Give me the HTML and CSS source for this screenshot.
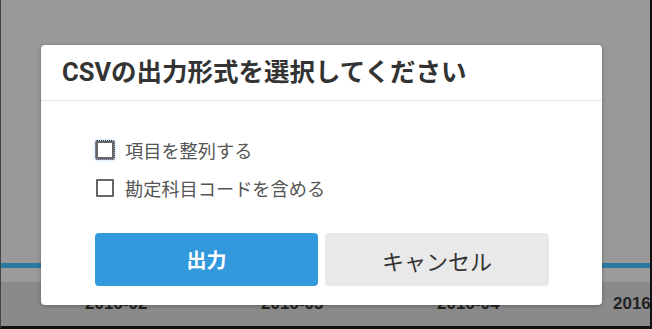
FILE: index.html
```html
<!DOCTYPE html>
<html lang="ja">
<head>
  <meta charset="UTF-8" />
  <title>CSV出力</title>
  <link rel="stylesheet" href="styles.css">
</head>
<body>
  <div class="screen">
    <div class="chart">
      <div class="chart-top"></div>
      <div class="chart-line"></div>
      <div class="chart-band"></div>
      <div class="chart-axis">
        <span class="axis-label">2016-02</span>
        <span class="axis-label">2016-03</span>
        <span class="axis-label">2016-04</span>
        <span class="axis-label">2016-05</span>
      </div>
    </div>
    <div class="dialog">
      <div class="dialog-header">CSVの出力形式を選択してください</div>
      <div class="dialog-body">
        <label class="option">
          <span class="check focused"></span>
          <span class="option-text">項目を整列する</span>
        </label>
        <label class="option">
          <span class="check"></span>
          <span class="option-text">勘定科目コードを含める</span>
        </label>
        <div class="actions">
          <button class="btn btn-primary">出力</button>
          <button class="btn btn-cancel">キャンセル</button>
        </div>
      </div>
    </div>
  </div>
</body>
</html>
```

FILE: styles.css
```css
html, body {
  margin: 0;
  padding: 0;
  width: 652px;
  height: 329px;
  overflow: hidden;
  background-color: #999;
  font-family: Roboto, "Noto Sans CJK JP", sans-serif;
}
.screen {
  position: relative;
  width: 652px;
  height: 329px;
  box-sizing: border-box;
  border-left: 1px solid #444;
  border-right: 2px solid #111;
  border-bottom: 3px solid #111;
  overflow: hidden;
}
.chart {
  display: flex;
  flex-direction: column;
}
.chart-top {
  height: 263px;
  background-color: #999;
}
.chart-line {
  height: 5px;
  background-color: #2c7aa4;
}
.chart-band {
  height: 14px;
  background-color: #9b9b9b;
}
.chart-axis {
  height: 44px;
  background-color: #8a8a8a;
  display: flex;
  padding: 12px 0 0 84px;
  box-sizing: border-box;
}
.axis-label {
  width: 176px;
  flex-shrink: 0;
  font-family: "Liberation Sans", Arial, sans-serif;
  font-weight: bold;
  font-size: 17px;
  line-height: 20px;
  color: #222;
}
.dialog {
  position: absolute;
  left: 40px;
  top: 45px;
  width: 561px;
  height: 260px;
  background: #fff;
  border-radius: 4px;
  box-shadow: 0 1px 4px rgba(0,0,0,0.3);
}
.dialog-header {
  height: 55px;
  border-bottom: 1px solid #e3e3e3;
  padding-left: 21px;
  font-size: 25.5px;
  font-weight: bold;
  line-height: 55px;
  color: #333;
}
.dialog-body {
  padding: 39px 53px 0 54px;
  display: flex;
  flex-direction: column;
}
.option {
  display: flex;
  align-items: center;
  height: 20px;
  margin-bottom: 18px;
  cursor: pointer;
}
.check {
  width: 18px;
  height: 18px;
  box-sizing: border-box;
  border: 2px solid #666;
  border-radius: 1px;
  margin-left: 1px;
  margin-right: 11px;
  background: #fff;
}
.check.focused {
  outline: 1px dotted #223;
  outline-offset: 0;
  box-shadow: 0 0 3px 1px #b8d8f8;
}
.option-text {
  font-size: 18.2px;
  color: #555;
}
.actions {
  display: flex;
  gap: 7px;
  margin-top: 17px;
}
.btn {
  width: 223px;
  height: 53px;
  border: none;
  border-radius: 4px;
  font-family: Roboto, "Noto Sans CJK JP", sans-serif;
  cursor: pointer;
}
.btn-primary {
  background-color: #3399dd;
  color: #fff;
  font-size: 20px;
  font-weight: bold;
}
.btn-cancel {
  width: 224px;
  background-color: #e9e9e9;
  color: #333;
  font-size: 22px;
}
```
